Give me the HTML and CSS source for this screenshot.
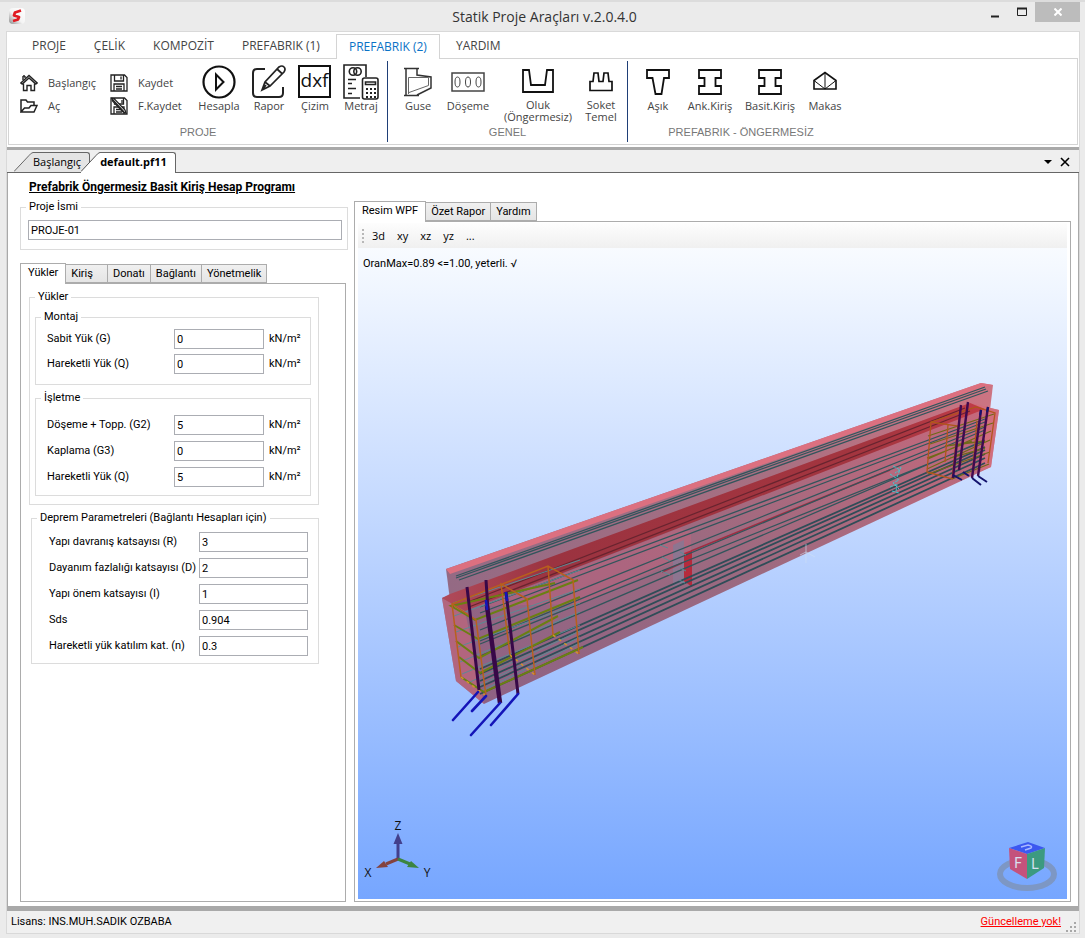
FILE: index.html
```
<!DOCTYPE html>
<html lang="tr">
<head>
    <meta charset="UTF-8">
    <meta name="viewport" content="width=device-width, initial-scale=1.0">
    <title>Statik Proje Araçları</title>
    <link rel="stylesheet" href="styles.css">
</head>
<body>
    <header class="titlebar">
        <svg class="app-logo" width="16" height="16" viewBox="0 0 16 16">
            <defs>
                <linearGradient id="logoBg" x1="0" y1="1" x2="1" y2="0">
                    <stop offset="0" stop-color="#8a8a8a"/>
                    <stop offset="0.45" stop-color="#f4f4f4"/>
                    <stop offset="1" stop-color="#fff"/>
                </linearGradient>
            </defs>
            <rect width="16" height="16" rx="4" fill="url(#logoBg)"/>
            <path d="M12 2.5 6 4.5 5 7.5l5 1.5-1 2.5-5 1.5" fill="none" stroke="#e01b22" stroke-width="2.8" stroke-linejoin="round"/>
        </svg>
        <h1>Statik Proje Araçları v.2.0.4.0</h1>
        <div class="window-buttons">
            <button aria-label="Küçült"><svg width="8" height="12"><path d="M0 10.5h8" stroke="#222" stroke-width="2"/></svg></button>
            <button aria-label="Büyüt"><svg width="10" height="10"><path d="M.5 1v7.5h9V1" fill="none" stroke="#222"/><path d="M0 1.5h10" stroke="#222" stroke-width="2"/></svg></button>
            <button class="close" aria-label="Kapat"><svg width="8" height="8"><path d="M.5.5l7 7M7.5.5l-7 7" stroke="#fff" stroke-width="2"/></svg></button>
        </div>
    </header>

    <div class="frame">
        <nav class="ribbon-tabs">
            <button>PROJE</button>
            <button>ÇELİK</button>
            <button>KOMPOZİT</button>
            <button>PREFABRIK (1)</button>
            <button class="active">PREFABRIK (2)</button>
            <button>YARDIM</button>
        </nav>

        <div class="ribbon">
            <section class="group group-project">
                <div class="tools">
                    <div class="small-tools">
                        <button>
                            <svg width="18" height="18" viewBox="0 0 18 18" fill="none" stroke="#222" stroke-width="1.4"><path d="M.8 9 9 1.5 17.2 9l-1.4 1L9 4 2.200 10z"/><path d="M3 2v4M5 2v2M3 2h2M3.500 9.500v7h3.500v-5h4v5h3.500v-7"/></svg>
                            <span>Başlangıç</span>
                        </button>
                        <button>
                            <svg width="18" height="18" viewBox="0 0 18 18" fill="none" stroke="#222" stroke-width="1.500"><path d="M1 15V3h5l1.500 2H14v3M1 15l3.500-4H9l2-2.500h6L14 15z"/></svg>
                            <span>Aç</span>
                        </button>
                    </div>
                    <div class="small-tools">
                        <button>
                            <svg width="18" height="18" viewBox="0 0 18 18" fill="none" stroke="#222" stroke-width="1.300"><path d="M1 1h13.500L17 3.500V17H1z"/><path d="M4.500 1v6h9V1M11 2.500v3M4 17v-7h10v7M6 12.500h6M6 15h6"/></svg>
                            <span>Kaydet</span>
                        </button>
                        <button>
                            <svg width="18" height="18" viewBox="0 0 18 18" fill="none" stroke="#222" stroke-width="1.300"><path d="M1 1h13.500L17 3.500V17H1z"/><path d="M4.500 1v6h9V1M4 17v-7h10v7M6 12.500h6M6 15h6"/><path d="M2 1.500 4.500 2 15 13l1 3-3-1L2.500 4z" fill="#fff"/><path d="m3 3 11 12M12 3v3"/></svg>
                            <span>F.Kaydet</span>
                        </button>
                    </div>
                    <button class="tool">
                        <svg width="34" height="36" viewBox="0 0 34 36" fill="none" stroke="#111" stroke-width="2.200"><circle cx="17" cy="18" r="15.500"/><path d="M14 10.500v15l7.500-7.500z" stroke-width="2"/></svg>
                        <span>Hesapla</span>
                    </button>
                    <button class="tool">
                        <svg width="36" height="36" viewBox="0 0 36 36" fill="none" stroke="#222" stroke-width="2"><path d="M14 5H6Q2 5 2 9v20q0 4 4 4h22q4 0 4-4v-6"/><path d="m11 26 3-8L28 3q3-2 5 0 2 2 0 5L19 22zM26 5l5.500 5M14 18l5 4M11 26l4-5" stroke-width="1.700"/></svg>
                        <span>Rapor</span>
                    </button>
                    <button class="tool">
                        <svg width="34" height="36" viewBox="0 0 34 36"><rect x="1" y="2" width="31" height="31" fill="#fff" stroke="#111" stroke-width="2"/><text x="16.500" y="23" class="dxf">dxf</text></svg>
                        <span>Çizim</span>
                    </button>
                    <button class="tool">
                        <svg width="36" height="36" viewBox="0 0 36 36" fill="none" stroke="#222" stroke-width="1.600"><path d="M17 34H1V1h22v12"/><circle cx="10" cy="7.500" r="3.700"/><circle cx="14.500" cy="7.500" r="3.700"/><path d="M5 15.500h8M5 19.500h4M5 24.500h8M5 29.500h4"/><rect x="19.500" y="14" width="15.500" height="21" rx="2" fill="#fff"/><path d="M22.500 18h10v2.500h-10z"/><path d="M23 25h10M23 29h10M23 33h10" stroke-dasharray="2 2" stroke-width="2"/></svg>
                        <span>Metraj</span>
                    </button>
                </div>
                <h2>PROJE</h2>
            </section>

            <section class="group group-general">
                <div class="tools">
                    <button class="tool">
                        <svg width="30" height="36" viewBox="0 0 30 36" fill="none" stroke="#333"><path d="M1 4.500h15M1 31.500h15M3 5v26M14 5v6l14 2v11L14 31" stroke-width="1.500"/><path d="M5.500 30V13.500h20v8L6 28.500" stroke="#666"/></svg>
                        <span>Guse</span>
                    </button>
                    <button class="tool">
                        <svg width="34" height="36" viewBox="0 0 34 36" fill="none" stroke="#444"><rect x="1" y="9" width="32" height="18" stroke-width="1.500"/><ellipse cx="6.500" cy="18" rx="2.500" ry="5"/><ellipse cx="17" cy="18" rx="2.500" ry="5"/><ellipse cx="27.500" cy="18" rx="2.500" ry="5"/></svg>
                        <span>Döşeme</span>
                    </button>
                    <button class="tool two-line">
                        <svg width="32" height="35" viewBox="0 0 32 35" fill="none" stroke="#111" stroke-width="1.800"><path d="M1 28V6h6l2 15h14l2-15h6v22z"/></svg>
                        <span>Oluk<br>(Öngermesiz)</span>
                    </button>
                    <button class="tool two-line">
                        <svg width="24" height="35" viewBox="0 0 24 35" fill="none" stroke="#111" stroke-width="1.700"><path d="M1 17.500h3L5 9h4l1 8.500h4L15 9h4l1 8.500h3v9H1z"/></svg>
                        <span>Soket<br>Temel</span>
                    </button>
                </div>
                <h2>GENEL</h2>
            </section>

            <section class="group group-prefab">
                <div class="tools">
                    <button class="tool">
                        <svg width="24" height="36" viewBox="0 0 24 36" fill="none" stroke="#111" stroke-width="1.800"><path d="M1 6h22v8h-5L15.500 30h-6L6.500 14H1z"/></svg>
                        <span>Aşık</span>
                    </button>
                    <button class="tool">
                        <svg width="24" height="36" viewBox="0 0 24 36" fill="none" stroke="#111" stroke-width="1.800"><path d="M1 6h22v8h-5.500v8H23v8H1v-8h5.500v-8H1z"/></svg>
                        <span>Ank.Kiriş</span>
                    </button>
                    <button class="tool">
                        <svg width="24" height="36" viewBox="0 0 24 36" fill="none" stroke="#111" stroke-width="1.800"><path d="M1 6h22v8h-5.500v8H23v8H1v-8h5.500v-8H1z"/></svg>
                        <span>Basit.Kiriş</span>
                    </button>
                    <button class="tool">
                        <svg width="24" height="36" viewBox="0 0 24 36" fill="none" stroke="#111" stroke-width="1.600"><path d="M1 25V16.500l11-8 11 8V25z"/><path d="M12 8.500V25M1 16.500 12 25l11-8.500" stroke-width="1"/></svg>
                        <span>Makas</span>
                    </button>
                </div>
                <h2>PREFABRIK - ÖNGERMESİZ</h2>
            </section>
        </div>

        <div class="doc-tabs">
            <button class="doc-tab">
                <svg width="19" height="20" viewBox="1 0 19 20"><path d="M1 20 16 3.500Q18.500.5 20 .5V20z" fill="#e4e4e4"/><path d="M1 19.500 16 3.500Q18.500.5 20 .5" fill="none" stroke="#666"/></svg><span>Başlangıç</span>
            </button>
            <button class="doc-tab active">
                <svg width="19" height="21" viewBox="1 0 19 21"><path d="M0 21 16 3.500Q18.500.5 20 .5V21z" fill="#fff"/><path d="M1 19.500 16 3.500Q18.500.5 20 .5" fill="none" stroke="#555"/></svg><span>default.pf11</span>
            </button>
            <div class="doc-actions">
                <button aria-label="Liste"><svg width="8" height="10"><path d="M0 3h8L4 7z"/></svg></button>
                <button aria-label="Belgeyi kapat"><svg width="10" height="10"><path d="M1 1l8 8M9 1 1 9" stroke="#000" stroke-width="1.600"/></svg></button>
            </div>
        </div>

        <main class="workspace">
            <div class="inputs">
                <h2>Prefabrik Öngermesiz Basit Kiriş Hesap Programı</h2>
                <fieldset class="project-name">
                    <legend>Proje İsmi</legend>
                    <input type="text" value="PROJE-01" aria-label="Proje İsmi">
                </fieldset>

                <div class="tabs">
                    <button class="active">Yükler</button>
                    <button class="kiris">Kiriş</button>
                    <button>Donatı</button>
                    <button>Bağlantı</button>
                    <button>Yönetmelik</button>
                </div>
                <div class="tab-page">
                    <fieldset class="loads">
                        <legend>Yükler</legend>
                        <fieldset class="load-group erection">
                            <legend>Montaj</legend>
                            <div class="row"><label for="g1">Sabit Yük (G)</label><input id="g1" type="text" value="0"><span>kN/m²</span></div>
                            <div class="row"><label for="q1">Hareketli Yük (Q)</label><input id="q1" type="text" value="0"><span>kN/m²</span></div>
                        </fieldset>
                        <fieldset class="load-group service">
                            <legend>İşletme</legend>
                            <div class="row"><label for="g2">Döşeme + Topp. (G2)</label><input id="g2" type="text" value="5"><span>kN/m²</span></div>
                            <div class="row"><label for="g3">Kaplama (G3)</label><input id="g3" type="text" value="0"><span>kN/m²</span></div>
                            <div class="row"><label for="q2">Hareketli Yük (Q)</label><input id="q2" type="text" value="5"><span>kN/m²</span></div>
                        </fieldset>
                    </fieldset>
                    <fieldset class="seismic">
                        <legend>Deprem Parametreleri (Bağlantı Hesapları için)</legend>
                        <div class="row"><label for="r">Yapı davranış katsayısı (R)</label><input id="r" type="text" value="3"></div>
                        <div class="row"><label for="d">Dayanım fazlalığı katsayısı (D)</label><input id="d" type="text" value="2"></div>
                        <div class="row"><label for="i">Yapı önem katsayısı (I)</label><input id="i" type="text" value="1"></div>
                        <div class="row"><label for="sds">Sds</label><input id="sds" type="text" value="0.904"></div>
                        <div class="row"><label for="n">Hareketli yük katılım kat. (n)</label><input id="n" type="text" value="0.3"></div>
                    </fieldset>
                </div>
            </div>

            <div class="viewer">
                <div class="tabs">
                    <button class="active">Resim WPF</button>
                    <button>Özet Rapor</button>
                    <button>Yardım</button>
                </div>
                <div class="tab-page">
                    <div class="view-toolbar">
                        <button>3d</button>
                        <button>xy</button>
                        <button>xz</button>
                        <button>yz</button>
                        <button>...</button>
                    </div>
                    <div class="scene">
                        <p>OranMax=0.89 &lt;=1.00, yeterli. √</p>
                        <svg viewBox="358 248 709 650">
                            <defs>
                                <linearGradient id="front" x1="0" y1="1" x2="1" y2="0">
                                    <stop offset="0" stop-color="#8d6184"/>
                                    <stop offset="0.5" stop-color="#9c6a80"/>
                                    <stop offset="1" stop-color="#c8687b"/>
                                </linearGradient>
                                <linearGradient id="slab" x1="0" y1="0" x2="1" y2="0">
                                    <stop offset="0" stop-color="#946a84"/>
                                    <stop offset="0.6" stop-color="#a87082"/>
                                    <stop offset="1" stop-color="#cd7482"/>
                                </linearGradient>
                                <linearGradient id="band" x1="0" y1="0" x2="1" y2="0">
                                    <stop offset="0" stop-color="#b04a5a"/>
                                    <stop offset="0.2" stop-color="#9b3340"/>
                                    <stop offset="0.8" stop-color="#a4353f"/>
                                    <stop offset="1" stop-color="#c23c48"/>
                                </linearGradient>
                            </defs>

                            <!-- beam body -->
                            <path d="M446 569 981 383l12 2-3 25-540 190z" fill="url(#slab)"/>
                            <path d="M446 569 981 383l12 2-9 2-534 187z" fill="#dc7080"/>
                            <path d="M442 598 970 403l29 7-8 57-507 237-28-23z" fill="url(#front)"/>
                            <path d="M442 598 465 611 484 704 456 681z" fill="#c0667c" opacity=".7"/>
                            <path d="m970 403 29 7-8 57-10 4 5-60z" fill="#d8707e" opacity=".7"/>
                            <path d="M480 606 680 528l11 4v22l-110 50z" fill="#d0627a" opacity=".35"/>
                            <path d="M442 598 450 594 970 403 985 409 465 611z" fill="url(#band)"/>
                            <path d="M469 607 970 411M468 602 965 408" stroke="#68242f" stroke-width="1.200"/>
                            <path d="M673 545 684 540v43l-11 3z" fill="#8d7590"/>
                            <path d="m684 553 8-3v37l-8-6z" fill="#b52a3c"/>
                            <path d="m662 572 20-9M691 551 890 470" stroke="#a02e42" stroke-width="1.600" fill="none"/>

                            <!-- longitudinal bars -->
                            <g fill="none" stroke="#32555c" stroke-width="1.300">
                                <path d="m456 576 529-189M456 578 986 389M459 580 988 391"/>
                                <path d="M480 607 985 419M480 613 985 422M480 630 985 427M480 641 985 430M480 644 985 441M480 656 985 440"/>
                                <path d="M480 669 985 447M480 674 985 450M480 681 985 454M480 687 985 458M480 694 985 463" stroke="#2f4d58" stroke-width="1.800"/>
                            </g>
                            <g fill="none" stroke="#5a8b94" stroke-width="1">
                                <path d="M453 603 580 560M454 616 580 570M456 632 580 589M458 647 580 603M460 662 580 612M462 674 580 625M470 682 580 631M476 687 580 637M481 691 580 643"/>
                                <path d="m660 545 8 3M662 557l8 4M661 571l9 4M680 552l6 3M680 568l6 3M679 580l6 3"/>
                            </g>

                            <!-- hoops at the left support -->
                            <g fill="none" stroke="#6b7f12" stroke-width="2">
                                <path d="M555 583 451 606 475 620 578 580M454 625 478 639 580 597M456 641 479 658 558 616M459 657 480 673 560 632M461 677 484 692 583 647"/>
                            </g>
                            <g fill="none" stroke="#b8601c" stroke-width="1.500">
                                <path d="M461 677 452 604 548 566 573 580 579 654M452 604 476 620 486 696M510 655 501 584 527 599 535 675M553 635 548 566"/>
                                <path d="M461 677 486 696M510 655 535 675M553 635 579 654" stroke="#d4912a" stroke-dasharray="3 4"/>
                            </g>
                            <g fill="none" stroke="#380848" stroke-width="3.500">
                                <path d="M467 587 479 690M486 580 488 610M506 592 518 694" stroke-width="3"/>
                                <path d="M487 606 500 703" stroke-width="4.500"/>
                            </g>
                            <g fill="none" stroke="#1414b8" stroke-width="2.600" stroke-linecap="round">
                                <path d="m486 601 1 8M506 593l1 7M478 692 453 720M486 696 472 711M500 703 471 735M518 694 491 725"/>
                            </g>

                            <!-- hoops at the right support -->
                            <g fill="none" stroke="#6e6a18" stroke-width="1.300">
                                <path d="M928 436 994 414M930 444 993 423M928 459 991 431M927 469 990 440M928 474 990 452M952 479 989 464M945 446 985 441M950 458 985 448M927 458 972 441"/>
                            </g>
                            <g fill="none" stroke="#b0561c" stroke-width="1.300">
                                <path d="M931 422 927 472 952 479 958 426zM931 422 976 407 995 413 988 463M948 425 945 462M977 421 973 466"/>
                            </g>
                            <path d="M961 405 953 478M968 402 959 470M981 410 972 478M988 407 978 476" fill="none" stroke="#400a50" stroke-width="2.400"/>
                            <path d="m972 478 9 7M978 476l9 6M953 475l9 5M963 472l6 4M988 407l-1 5M981 410l-1 5" fill="none" stroke="#14146e" stroke-width="2"/>
                            <path d="m893 466 7 4-5 3M897 477l4-10M890 474l9 6-6 3 6 6M890 487l7-3-1 8M892 491l7 2" fill="none" stroke="#45c4cc" stroke-width="1" stroke-dasharray="3 1"/>
                            <path d="M806 544v19M800 555l6-3 9 5" fill="none" stroke="#cfe0f4" stroke-width="1" opacity=".6"/>

                            <!-- axes -->
                            <g stroke-width="3">
                                <path d="M398 859v-16" stroke="#43408c"/><path d="m393.500 844 4.500-11 4.500 11z" fill="#43408c"/>
                                <path d="m398 859-12 5" stroke="#84433f"/><path d="m376 868 8-7 4 6z" fill="#84433f"/>
                                <path d="m398 859 12 5" stroke="#3c8540"/><path d="m419 868-12-1 4-6z" fill="#3c8540"/>
                            </g>
                            <g class="axis-label">
                                <text x="398" y="830">Z</text>
                                <text x="368" y="877">X</text>
                                <text x="427" y="877">Y</text>
                            </g>

                            <!-- view cube -->
                            <ellipse cx="1027" cy="874" rx="27" ry="14" fill="none" stroke="#7d97c4" stroke-width="6"/>
                            <path d="m1009 848 19-6 17 6-18 6z" fill="#3c58f0"/>
                            <path d="m1009 848 18 6v25l-17-10z" fill="#c4527c"/>
                            <path d="m1045 848-18 6v25l17-11z" fill="#3c9a80"/>
                            <path d="m1021 847 7-2q5 1 3 3l-6 2" fill="none" stroke="#a9b8ff" stroke-width="1.500"/>
                            <text class="cube-face" x="1018" y="868">F</text>
                            <text class="cube-face" x="1035" y="869">L</text>
                        </svg>
                    </div>
                </div>
            </div>
        </main>

        <footer class="statusbar">
            <span>Lisans: INS.MUH.SADIK OZBABA</span>
            <a href="#">Güncelleme yok!</a>
            <svg width="11" height="11" fill="#a8a8a8"><path d="M8 0h2v2H8zM4 4h2v2H4zM8 4h2v2H8zM0 8h2v2H0zM4 8h2v2H4zM8 8h2v2H8z"/></svg>
        </footer>
    </div>
</body>
</html>
```
FILE: styles.css
```
* {
    box-sizing: border-box;
}

body {
    margin: 0;
    min-height: 100vh;
    display: flex;
    flex-direction: column;
    background: #ebebeb;
    color: #000;
    font-family: Roboto, "Liberation Sans", sans-serif;
    font-size: 11px;
    line-height: 12px;
}

h1, h2, p {
    margin: 0;
    font-size: inherit;
    font-weight: normal;
}

button {
    margin: 0;
    padding: 0;
    border: none;
    background: none;
    color: inherit;
    font: inherit;
}

svg {
    display: block;
    flex: none;
}

/* title bar */
.titlebar {
    display: grid;
    grid-template-columns: 1fr auto 1fr;
    height: 31px;
    padding: 0 5px 0 9px;
    border-top: 2px solid #dcdcdc;
}

.app-logo {
    margin-top: 6px;
}

.titlebar h1 {
    color: #333;
    font-family: "Open Sans", sans-serif;
    font-size: 14px;
    line-height: 29px;
}

.window-buttons {
    display: flex;
    justify-content: flex-end;
}

.window-buttons button {
    width: 27px;
    height: 20px;
    display: flex;
    align-items: center;
    justify-content: center;
}

.window-buttons .close {
    width: 45px;
    background: #bcbcbc;
}

.frame {
    flex: 1;
    display: flex;
    flex-direction: column;
    margin: 0 5px 4px 6px;
    border: 1px solid #d9d9d9;
    background: #fff;
}

/* ribbon */
.ribbon-tabs {
    display: flex;
    gap: 4px;
    height: 26px;
    padding: 2px 0 0 13px;
    color: #444;
    font-family: "Open Sans", sans-serif;
    font-size: 12px;
}

.ribbon-tabs button {
    padding: 0 12px;
}

.ribbon-tabs .active {
    z-index: 1;
    margin-bottom: -1px;
    border: 1px solid #d4d4d4;
    border-bottom: none;
    background: #fff;
    color: #0a72c6;
}

.ribbon {
    display: flex;
    height: 87px;
    margin: 0 1px 2px;
    border: 1px solid #d4d4d4;
    color: #444;
    font-family: "Open Sans", sans-serif;
}

.group {
    display: flex;
    flex-direction: column;
    margin: 2px 0;
    border-right: 1px solid #1f3f77;
}

.group:last-child {
    border-right: none;
}

.group h2 {
    color: #777;
    font-family: "Liberation Sans", Arial, sans-serif;
    line-height: 16px;
    text-align: center;
}

.tools {
    display: grid;
    height: 63px;
    padding-top: 3px;
}

.group-project .tools {
    grid-template-columns: 90px 84px 50px 50px 42px 50px;
    padding-left: 11px;
    padding-right: 1px;
}

.group-general .tools {
    grid-template-columns: 50px 50px 90px 36px;
    padding-left: 5px;
    padding-right: 8px;
}

.group-prefab .tools {
    grid-template-columns: 48px 56px 64px 46px;
    padding-left: 6px;
    padding-right: 6px;
}

.small-tools {
    padding-top: 7px;
}

.small-tools button {
    display: flex;
    align-items: center;
    gap: 10px;
    height: 23px;
}

.tool {
    display: flex;
    flex-direction: column;
    align-items: center;
    white-space: nowrap;
}

.dxf {
    fill: #111;
    font-family: "Open Sans", sans-serif;
    font-size: 19px;
    text-anchor: middle;
}

/* document tabs */
.doc-tabs {
    display: flex;
    align-items: flex-end;
    height: 26px;
    padding: 0 9px 0 7px;
    border-top: 3px solid #a9a9a9;
    border-bottom: 1px solid #666;
    background: #efefef;
    font-family: "Open Sans", sans-serif;
}

.doc-tab {
    display: flex;
    height: 20px;
}

.doc-tab span {
    height: 20px;
    padding: 2px 8px 0 0;
    border: 1px solid #666;
    border-width: 1px 1px 0 0;
    border-top-right-radius: 3px;
    background: #e4e4e4;
    line-height: 14px;
}

.doc-tab.active {
    z-index: 1;
    height: 21px;
    margin-left: -9px;
    margin-bottom: -1px;
    font-weight: bold;
}

.doc-tab.active span {
    height: 21px;
    background: #fff;
}

.doc-actions {
    display: flex;
    gap: 8px;
    margin-left: auto;
    padding-bottom: 5px;
}

/* workspace */
.workspace {
    flex: 1;
    display: grid;
    grid-template-columns: 328px 1fr;
    gap: 6px;
    padding: 0 7px 4px 12px;
    border: 1px solid #a9a9a9;
    border-width: 0 1px 5px;
}

.inputs,
.viewer {
    display: flex;
    flex-direction: column;
}

.inputs {
    padding-top: 6px;
}

.viewer {
    padding-top: 27px;
}

.inputs h2 {
    margin: 0 0 6px 9px;
    font-size: 12px;
    font-weight: bold;
    line-height: 16px;
    text-decoration: underline;
}

fieldset {
    margin: 0;
    padding: 0;
    border: 1px solid #dcdcdc;
}

legend {
    padding: 0 3px;
    line-height: 12px;
}

input {
    width: 100%;
    height: 20px;
    padding: 0 2px;
    border: 1px solid #abadb3;
    background: #fff;
    color: #000;
    font: inherit;
}

.project-name {
    margin-bottom: 12px;
    padding: 7px 5px 9px 7px;
}

.project-name legend {
    margin-left: -2px;
}

.tabs {
    display: flex;
    align-items: flex-end;
    height: 21px;
}

.tabs button {
    height: 19px;
    padding: 0 5px;
    border: 1px solid #acacac;
    border-left: none;
    background: linear-gradient(#f0f0f0, #e5e5e5);
}

.tabs .active {
    z-index: 1;
    height: 21px;
    margin-bottom: -1px;
    padding: 0 7px 2px;
    border-left: 1px solid #acacac;
    border-bottom: none;
    background: #fff;
}

.tabs .kiris {
    padding-right: 14px;
}

.tab-page {
    flex: 1;
    border: 1px solid #acacac;
}

.inputs .tab-page {
    margin-right: 2px;
    padding: 7px 26px 0 8px;
}

.loads {
    padding: 8px 7px 8px 5px;
}

.row {
    display: grid;
    grid-template-columns: 127px 90px auto;
    align-items: center;
}

.row + .row {
    margin-top: 6px;
}

.row span {
    padding-left: 5px;
}

.load-group {
    padding-left: 11px;
}

.load-group legend {
    margin-left: -6px;
}

.erection {
    margin-bottom: 7px;
    padding-top: 6px;
    padding-bottom: 10px;
}

.erection .row + .row {
    margin-top: 5px;
}

.service {
    padding-top: 11px;
    padding-bottom: 8px;
}

.seismic {
    margin: 7px 0 0 2px;
    padding: 8px 10px 7px 17px;
}

.seismic legend {
    margin-left: -12px;
}

.seismic .row {
    grid-template-columns: 150px 1fr;
}

/* 3d view */
.viewer .tab-page {
    display: flex;
    flex-direction: column;
    padding: 1px 3px 2px;
}

.view-toolbar {
    display: flex;
    align-items: center;
    gap: 12px;
    height: 25px;
    padding-left: 14px;
    background: linear-gradient(#fdfdfd, #f0f0f0);
    font-family: "Open Sans", sans-serif;
}

.view-toolbar::before {
    content: "";
    width: 2px;
    height: 14px;
    margin: 0 -4px 0 -10px;
    background: repeating-linear-gradient(#b8b8b8 0 2px, transparent 2px 4px);
}

.scene {
    flex: 1;
    position: relative;
    background: linear-gradient(#f8fbff, #76a6ff);
}

.scene p {
    position: absolute;
    top: 10px;
    left: 5px;
}

.scene svg {
    width: 100%;
}

.axis-label {
    fill: #111;
    font-family: "Open Sans", sans-serif;
    font-size: 12px;
    text-anchor: middle;
}

.cube-face {
    fill: #d8e0f0;
    font-size: 14px;
    text-anchor: middle;
}

/* status bar */
.statusbar {
    display: flex;
    align-items: center;
    height: 22px;
    padding: 0 2px 0 4px;
    background: #f0f0f0;
}

.statusbar a {
    margin-left: auto;
    margin-right: 5px;
    color: #f00;
}

.statusbar svg {
    align-self: flex-end;
}
```
